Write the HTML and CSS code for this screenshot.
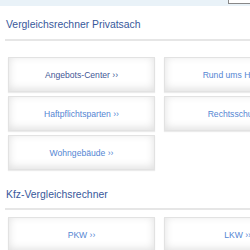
FILE: index.html
```html
<!DOCTYPE html>
<html lang="de">
<head>
<meta charset="UTF-8">
<title>Vergleichsrechner</title>
<link rel="stylesheet" href="styles.css">
</head>
<body>

<div class="topbar">
	<div class="search"></div>
</div>

<div class="page">
	<h2 class="title">Vergleichsrechner Privatsach</h2>
	<div class="rule"></div>
	<div class="tiles first">
		<a class="tile active" href="#">Angebots-Center ››</a>
		<a class="tile" href="#">Rund ums Haus ››</a>
		<a class="tile" href="#">Haftpflichtsparten ››</a>
		<a class="tile" href="#">Rechtsschutz ››</a>
		<a class="tile" href="#">Wohngebäude ››</a>
	</div>

	<h2 class="title kfz">Kfz-Vergleichsrechner</h2>
	<div class="rule"></div>
	<div class="tiles">
		<a class="tile" href="#">PKW ››</a>
		<a class="tile" href="#">LKW ››</a>
	</div>
</div>

</body>
</html>
```

FILE: styles.css
```css
html {
	overflow: hidden;
}
body {
	margin: 0;
	width: 330px;
	font-family: "Liberation Sans", Arial, sans-serif;
	background: #fff;
}

.topbar {
	display: flex;
	height: 6px;
	background: #e9f2f8;
}
.search {
	margin-left: 228px;
	width: 80px;
	height: 3px;
	background: #fff;
	border-left: 1px solid #888;
	border-bottom: 1px solid #888;
}

.page {
	padding-left: 5px;
}

.title {
	margin: 0;
	padding: 13px 0 0 1px;
	height: 20px;
	font-size: 10.4px;
	font-weight: normal;
	line-height: 12px;
	color: #38589b;
}
.title.kfz {
	padding-top: 19px;
	height: 19px;
}
.rule {
	height: 2px;
	background: #e6e6e6;
}

.tiles {
	display: grid;
	grid-template-columns: 147px 147px;
	column-gap: 9px;
	row-gap: 4px;
	margin: 7px 0 0 3px;
}
.tiles.first {
	margin-top: 16px;
}
.tile {
	display: flex;
	align-items: center;
	justify-content: center;
	height: 33px;
	border: 1px solid #e2e2e2;
	background: #fff;
	box-shadow: inset 0 -2px 8px rgba(0,0,0,.13), 0 1px 1px rgba(0,0,0,.08);
	font-size: 8.6px;
	color: #5486d3;
	text-decoration: none;
}
.tile.active {
	color: #3f5796;
}
```
